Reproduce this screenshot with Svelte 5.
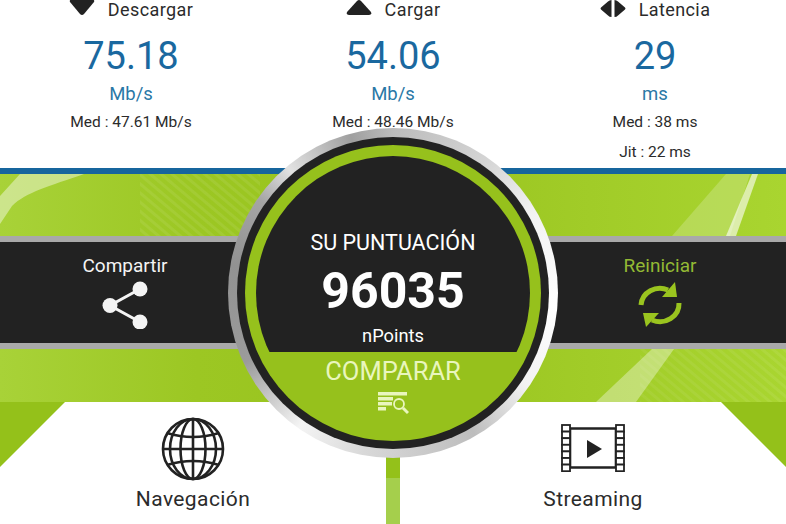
<script>
	const stats = [
		{ icon: 'down', label: 'Descargar', value: '75.18', unit: 'Mb/s', notes: ['Med : 47.61 Mb/s'] },
		{ icon: 'up', label: 'Cargar', value: '54.06', unit: 'Mb/s', notes: ['Med : 48.46 Mb/s'] },
		{ icon: 'both', label: 'Latencia', value: '29', unit: 'ms', notes: ['Med : 38 ms', 'Jit : 22 ms'] }
	];
</script>

<div class="page">
	<section class="stats">
		{#each stats as stat}
			<div class="stat">
				<div class="stat-head">
					<svg class="stat-icon" viewBox="0 0 26 18" width="26" height="18" aria-hidden="true">
						{#if stat.icon === 'down'}
							<path d="M1 2 Q0 0 3 -1 H23 Q26 0 25 2 L15 14 Q13 16 11 14 Z" />
						{:else if stat.icon === 'up'}
							<path d="M1 12 Q0 15 3 15 H23 Q26 15 25 12 L15 1 Q13 -1 11 1 Z" />
						{:else}
							<path d="M11.5 0 V17 Q9.5 17 8 15.5 L1 9.5 Q0 8.5 1 7.5 L8 1.5 Q9.5 0 11.5 0 Z" />
							<path d="M14.5 0 V17 Q16.5 17 18 15.5 L25 9.5 Q26 8.5 25 7.5 L18 1.5 Q16.5 0 14.5 0 Z" />
						{/if}
					</svg>
					<span>{stat.label}</span>
				</div>
				<div class="stat-value">{stat.value}</div>
				<div class="stat-unit">{stat.unit}</div>
				{#each stat.notes as note}
					<div class="stat-note">{note}</div>
				{/each}
			</div>
		{/each}
	</section>

	<section class="band">
		<svg class="swoosh" viewBox="0 0 786 228" preserveAspectRatio="none" aria-hidden="true">
			<defs>
				<pattern id="lines" width="7" height="7" patternUnits="userSpaceOnUse" patternTransform="rotate(40)">
					<rect width="7" height="3" fill="#fff" opacity="0.07" />
				</pattern>
				<linearGradient id="fade" x1="0" y1="0" x2="1" y2="0">
					<stop offset="0" stop-color="#fff" stop-opacity="0" />
					<stop offset="1" stop-color="#fff" stop-opacity="1" />
				</linearGradient>
				<mask id="fade-mask">
					<rect width="786" height="228" fill="url(#fade)" />
				</mask>
			</defs>
			<path d="M20 0 H84 C50 12 26 18 12 32 L0 50 V22 Z" fill="#fff" opacity="0.42" />
			<rect x="140" y="0" width="120" height="62" fill="url(#lines)" />
			<rect x="640" y="175" width="146" height="53" fill="url(#lines)" mask="url(#fade-mask)" />
			<path d="M726 0 H750 L730 62 H672 Z" fill="#fff" opacity="0.2" />
			<path d="M752 0 H758 L736 62 H726 Z" fill="#fff" opacity="0.6" />
			<path d="M652 175 H674 L636 228 H596 Z" fill="#fff" opacity="0.35" />
		</svg>

		<div class="bar">
			<button class="bar-action">
				<span>Compartir</span>
				<svg viewBox="0 0 46 48" width="46" height="48" aria-hidden="true">
					<path d="M38 8 L8 24.500 L38 41" fill="none" stroke="#f4f4f4" stroke-width="3" />
					<circle cx="38" cy="8" r="7.500" fill="#f4f4f4" />
					<circle cx="8" cy="24.500" r="7.500" fill="#f4f4f4" />
					<circle cx="38" cy="41" r="7.500" fill="#f4f4f4" />
				</svg>
			</button>
			<div></div>
			<button class="bar-action restart">
				<span>Reiniciar</span>
				<svg viewBox="0 0 46 48" width="46" height="48" aria-hidden="true">
					<g fill="none" stroke="#9ac41f" stroke-width="5">
						<path d="M4 24 A19 18 0 0 1 31 9" />
						<path d="M42 22 A19 18 0 0 1 15 39" />
					</g>
					<path d="M38 1 L40 16 L25 16 Z" fill="#9ac41f" />
					<path d="M6 32 L22 32 L9 46 Z" fill="#9ac41f" />
				</svg>
			</button>
		</div>
	</section>

	<section class="links">
		<i class="corner left"></i>
		<i class="corner right"></i>
		<i class="stem"></i>

		<div class="link">
			<svg viewBox="0 0 64 64" width="64" height="64" aria-hidden="true">
				<g fill="none" stroke="#222" stroke-width="2.600">
					<circle cx="32" cy="32" r="30" />
					<ellipse cx="32" cy="32" rx="12.500" ry="30" />
					<ellipse cx="32" cy="32" rx="23" ry="30" />
					<path d="M32 2 V62" />
					<path d="M2 32 H62" />
					<path d="M6 16 Q32 24 58 16" />
					<path d="M6 48 Q32 40 58 48" />
				</g>
			</svg>
			<span>Navegación</span>
		</div>

		<div class="link">
			<svg class="film" viewBox="0 0 64 48" width="64" height="48" aria-hidden="true">
				<path d="M9 4.500 H55 M9 43.500 H55 M9 5 V43 M55 5 V43" fill="none" stroke="#222" stroke-width="2.600" />
				<g fill="#fff" stroke="#222" stroke-width="1.800">
					{#each [0, 1] as side}
						{#each [0, 1, 2, 3, 4, 5, 6] as n}
							<rect x={1 + side * 54} y={1 + n * 6.600} width="8" height="6.600" />
						{/each}
					{/each}
				</g>
				<path d="M26 16 L41 25 L26 34 Z" fill="#222" />
			</svg>
			<span>Streaming</span>
		</div>
	</section>

	<div class="dial">
		<div class="dial-black">
			<div class="dial-green">
				<div class="dial-inner">
					<div class="score">
						<div class="score-title">SU PUNTUACIÓN</div>
						<div class="score-value">96035</div>
						<div class="score-unit">nPoints</div>
					</div>
					<div class="compare">
						<span>COMPARAR</span>
						<svg viewBox="0 0 31 23" width="31" height="23" aria-hidden="true">
							<g fill="#e9f6bd">
								<rect x="0" y="0" width="29" height="3.500" />
								<rect x="0" y="5" width="15" height="3.500" />
								<rect x="0" y="10" width="14" height="3.500" />
								<rect x="0" y="15" width="8" height="3.500" />
							</g>
							<circle cx="21" cy="12" r="5" fill="none" stroke="#e9f6bd" stroke-width="1.800" />
							<path d="M25 16 L30 21" stroke="#e9f6bd" stroke-width="3" />
						</svg>
					</div>
				</div>
			</div>
		</div>
	</div>
</div>

<style>
	:global(body) {
		margin: 0;
	}

	.page {
		position: relative;
		width: 786px;
		height: 524px;
		overflow: hidden;
		background: #fff;
		font-family: Roboto, 'Liberation Sans', sans-serif;
		color: #2b2b2b;
	}

	.stats {
		display: grid;
		grid-template-columns: repeat(3, 1fr);
		height: 168px;
	}

	.stat {
		display: flex;
		flex-direction: column;
		align-items: center;
		text-align: center;
	}

	.stat-head {
		display: flex;
		align-items: center;
		gap: 13px;
		height: 18px;
		font-size: 18px;
		letter-spacing: 0.4px;
	}

	.stat-icon {
		fill: #222;
	}

	.stat-value {
		margin-top: 16px;
		height: 44px;
		line-height: 44px;
		font-size: 38px;
		color: #1a689f;
	}

	.stat-unit {
		margin-top: 5px;
		height: 22px;
		line-height: 22px;
		font-size: 18.500px;
		color: #2a78a6;
	}

	.stat-note {
		margin-top: 5px;
		height: 25px;
		line-height: 25px;
		font-size: 15.500px;
	}

	.band {
		position: relative;
		height: 234px;
		border-top: 6px solid #17659d;
		box-sizing: border-box;
		padding-top: 62px;
		background: linear-gradient(90deg, #a8d238 0, #9cc723 25%, #98c31d 50%, #a1cc28 75%, #a9d530 100%);
	}

	.swoosh {
		position: absolute;
		top: 0;
		left: 0;
		width: 786px;
		height: 228px;
	}

	.bar {
		position: relative;
		display: grid;
		grid-template-columns: 250px 1fr 252px;
		height: 113px;
		box-sizing: border-box;
		background: #222;
		border-top: 6px solid #a9a9a9;
		border-bottom: 6px solid #a9a9a9;
	}

	.bar-action {
		display: flex;
		flex-direction: column;
		align-items: center;
		gap: 4px;
		padding: 13px 0 0;
		border: 0;
		background: none;
		font: inherit;
		font-size: 19px;
		line-height: 22px;
		color: #f4f4f4;
	}

	.restart {
		color: #93b934;
	}

	.links {
		position: relative;
		display: grid;
		grid-template-columns: 200px 200px;
		gap: 200px;
		height: 122px;
		padding: 0 93px;
	}

	.corner {
		position: absolute;
		top: 0;
		width: 65px;
		height: 65px;
		background: #94c11a;
	}

	.corner.left {
		left: 0;
		clip-path: polygon(0 0, 100% 0, 0 100%);
	}

	.corner.right {
		right: 0;
		clip-path: polygon(0 0, 100% 0, 100% 100%);
	}

	.stem {
		position: absolute;
		top: 0;
		bottom: 0;
		left: 386px;
		width: 14px;
		background: linear-gradient(#94c11a 0, #94c11a 76px, #a5cf4c 76px);
	}

	.link {
		position: relative;
		display: flex;
		flex-direction: column;
		align-items: center;
		padding-top: 15px;
		font-size: 21px;
		letter-spacing: 0.4px;
	}

	.link span {
		position: absolute;
		top: 85px;
	}

	.film {
		margin-top: 7px;
	}

	.dial {
		position: absolute;
		top: 128px;
		left: 228px;
		width: 330px;
		height: 330px;
		box-sizing: border-box;
		padding: 9px;
		border-radius: 50%;
		background: conic-gradient(
			#bcbcbc 0deg,
			#d4d4d4 35deg,
			#f2f2f2 60deg,
			#fff 95deg,
			#f2f2f2 125deg,
			#bdbdbd 150deg,
			#d8d8d8 190deg,
			#f4f4f4 215deg,
			#9b9b9b 245deg,
			#929292 280deg,
			#a5a5a5 305deg,
			#e2e2e2 320deg,
			#9f9f9f 345deg,
			#bcbcbc 360deg
		);
	}

	.dial-black {
		height: 100%;
		box-sizing: border-box;
		padding: 8px;
		border-radius: 50%;
		background: #222;
	}

	.dial-green {
		height: 100%;
		box-sizing: border-box;
		padding: 11px;
		border-radius: 50%;
		background: #96c11c;
	}

	.dial-inner {
		display: flex;
		flex-direction: column;
		height: 100%;
		border-radius: 50%;
		overflow: hidden;
	}

	.score {
		flex: 0 0 196px;
		display: flex;
		flex-direction: column;
		align-items: center;
		box-sizing: border-box;
		padding-top: 75px;
		background: #222;
		color: #fff;
	}

	.score-title {
		height: 24px;
		line-height: 24px;
		font-size: 21.500px;
	}

	.score-value {
		margin-top: 8px;
		height: 56px;
		line-height: 56px;
		font-size: 50px;
		font-weight: 700;
	}

	.score-unit {
		margin-top: 5px;
		height: 24px;
		line-height: 24px;
		font-size: 18.300px;
	}

	.compare {
		display: flex;
		flex-direction: column;
		align-items: center;
		gap: 7px;
		padding-top: 5px;
		font-size: 25.500px;
		line-height: 28px;
		color: #e9f6bd;
	}
</style>
